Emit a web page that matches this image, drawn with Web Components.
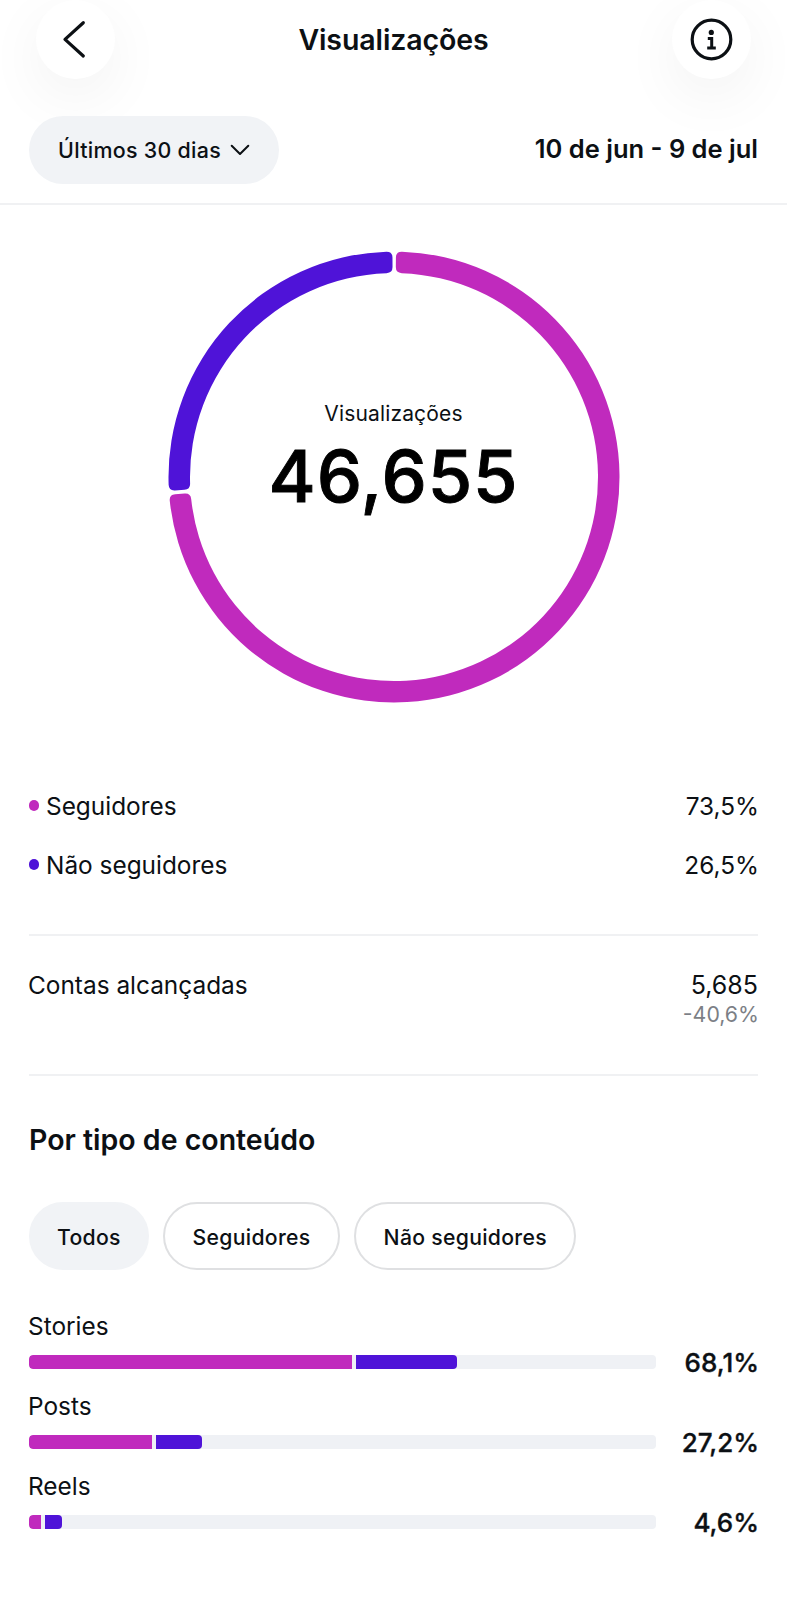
<!DOCTYPE html>
<html lang="pt">
<head>
<meta charset="utf-8">
<title>Visualizações</title>
<style>
  html, body { margin: 0; background: #fff; }
  body { font-family: Inter, "Noto Sans", sans-serif; color: #0c1014; }
</style>
</head>
<body>
<insights-page>
  <top-bar></top-bar>
  <period-bar label="Últimos 30 dias" range="10 de jun - 9 de jul"></period-bar>
  <donut-chart title-text="Visualizações" value="46,655"></donut-chart>
  <legend-list>
    <legend-row color="#c02abd" label="Seguidores" value="73,5%"></legend-row>
    <legend-row color="#4f13d8" label="Não seguidores" value="26,5%"></legend-row>
  </legend-list>
  <stat-row label="Contas alcançadas" value="5,685" delta="-40,6%"></stat-row>
  <content-section heading="Por tipo de conteúdo">
    <filter-chip slot="chips" active>Todos</filter-chip>
    <filter-chip slot="chips">Seguidores</filter-chip>
    <filter-chip slot="chips">Não seguidores</filter-chip>
    <content-bar label="Stories" value="68,1%" a="51.5" b="16.2"></content-bar>
    <content-bar label="Posts" value="27,2%" a="19.6" b="7.4"></content-bar>
    <content-bar label="Reels" value="4,6%" a="1.9" b="2.8"></content-bar>
  </content-section>
</insights-page>

<script>
class InsightsPage extends HTMLElement {
  constructor() {
    super();
    this.attachShadow({ mode: "open" }).innerHTML = `
      <style>
        :host { display: block; width: 787px; height: 1600px; overflow: hidden; background: #fff; }
      </style>
      <slot></slot>`;
  }
}

class TopBar extends HTMLElement {
  constructor() {
    super();
    this.attachShadow({ mode: "open" }).innerHTML = `
      <style>
        :host { display: flex; align-items: center; justify-content: space-between;
                height: 79px; padding: 0 36px; margin-bottom: 37px; }
        .btn { width: 79px; height: 79px; border-radius: 50%; background: #fff;
               box-shadow: 0 18px 60px rgba(0,0,0,.055); display: flex; align-items: center; justify-content: center; }
        h1 { margin: 0; font-size: 28.5px; line-height: 36px; font-weight: 600; letter-spacing: -.1px; }
        svg { display: block; }
      </style>
      <div class="btn">
        <svg width="79" height="79" viewBox="0 0 79 79" fill="none" stroke="#0c1014" stroke-width="3.2" stroke-linecap="round" stroke-linejoin="round">
          <path d="M47.3 22.7 29 39.4 47.3 56"/>
        </svg>
      </div>
      <h1>Visualizações</h1>
      <div class="btn">
        <svg width="79" height="79" viewBox="0 0 79 79" fill="none" stroke="#0c1014">
          <circle cx="39.5" cy="39.5" r="19.3" stroke-width="3.2"/>
          <circle cx="39.3" cy="32.4" r="2.6" fill="#0c1014" stroke="none"/>
          <path d="M35.8 38.4h3.9v9.4M35.2 48h8.6" stroke-width="3"/>
        </svg>
      </div>`;
  }
}

class PeriodBar extends HTMLElement {
  constructor() {
    super();
    this.attachShadow({ mode: "open" }).innerHTML = `
      <style>
        :host { display: flex; align-items: center; justify-content: space-between;
                height: 68px; padding: 0 29px 19px; border-bottom: 2px solid #f0f1f3; }
        .pill { height: 68px; width: 250px; box-sizing: border-box; padding-left: 29px; border-radius: 34px; background: #f1f3f6;
                display: flex; align-items: center; gap: 9px; font-size: 21.4px; font-weight: 500; letter-spacing: .3px; }
        .range { font-size: 25.5px; font-weight: 600; margin-bottom: 3px; }
        svg { display: block; }
      </style>
      <div class="pill">
        <span>${this.getAttribute("label")}</span>
        <svg width="20" height="12" viewBox="0 0 20 12" fill="none" stroke="#0c1014" stroke-width="2" stroke-linecap="round" stroke-linejoin="round">
          <path d="M1.7 1.7 10 10l8.3-8.3"/>
        </svg>
      </div>
      <span class="range">${this.getAttribute("range")}</span>`;
  }
}

// ring segment with slightly rounded corners, angles in degrees clockwise from the top
function ringSegment(cx, cy, R, r, a0, a1, c) {
  const pt = (rad, deg) => {
    const t = (deg - 90) * Math.PI / 180;
    return (cx + rad * Math.cos(t)).toFixed(2) + " " + (cy + rad * Math.sin(t)).toFixed(2);
  };
  const dO = c / R * 180 / Math.PI;
  const dI = c / r * 180 / Math.PI;
  const large = a1 - a0 > 180 ? 1 : 0;
  return `M${pt(R, a0 + dO)} A${R} ${R} 0 ${large} 1 ${pt(R, a1 - dO)} Q${pt(R, a1)} ${pt(R - c, a1)}
          L${pt(r + c, a1)} Q${pt(r, a1)} ${pt(r, a1 - dI)} A${r} ${r} 0 ${large} 0 ${pt(r, a0 + dI)}
          Q${pt(r, a0)} ${pt(r + c, a0)} L${pt(R - c, a0)} Q${pt(R, a0)} ${pt(R, a0 + dO)}Z`;
}

class DonutChart extends HTMLElement {
  constructor() {
    super();
    const pink = ringSegment(226, 226, 225.5, 204, 0.5, 265.5, 6);
    const blue = ringSegment(226, 226, 225.5, 204, 266.5, 359.6, 6);
    this.attachShadow({ mode: "open" }).innerHTML = `
      <style>
        :host { display: block; position: relative; width: 452px; height: 452px; margin: 46px auto 0; }
        svg { display: block; }
        .center { position: absolute; left: 0; right: 0; top: 149px; text-align: center; }
        .t { font-size: 21px; line-height: 28px; letter-spacing: .15px; }
        .v { font-size: 72px; line-height: 76px; font-weight: 500; color: #000; margin-top: 10px; letter-spacing: .9px;
             -webkit-text-stroke: .9px #000; }
      </style>
      <svg width="452" height="452" viewBox="0 0 452 452">
        <path d="${pink}" fill="#c02abd"/>
        <path d="${blue}" fill="#4f13d8"/>
      </svg>
      <div class="center">
        <div class="t">${this.getAttribute("title-text")}</div>
        <div class="v">${this.getAttribute("value")}</div>
      </div>`;
  }
}

class LegendList extends HTMLElement {
  constructor() {
    super();
    this.attachShadow({ mode: "open" }).innerHTML = `
      <style>
        :host { display: block; margin: 73px 29px 0; padding-bottom: 40px; border-bottom: 2px solid #f0f1f3; }
      </style>
      <slot></slot>`;
  }
}

class LegendRow extends HTMLElement {
  constructor() {
    super();
    this.attachShadow({ mode: "open" }).innerHTML = `
      <style>
        :host { display: flex; align-items: center; height: 59px; font-size: 24.4px; }
        i { width: 10.5px; height: 10.5px; border-radius: 50%; background: ${this.getAttribute("color")}; margin: 0 7px 0 -.5px; }
        .v { margin-left: auto; margin-right: -1px; }
      </style>
      <i></i><span>${this.getAttribute("label")}</span>
      <span class="v">${this.getAttribute("value")}</span>`;
  }
}

class StatRow extends HTMLElement {
  constructor() {
    super();
    this.attachShadow({ mode: "open" }).innerHTML = `
      <style>
        :host { display: flex; justify-content: space-between; margin: 0 29px; padding: 34px 0 47px;
                border-bottom: 2px solid #f0f1f3; font-size: 24.4px; line-height: 30px; }
        .lbl { margin-left: -1px; }
        .r { text-align: right; }
        .v { font-size: 25px; }
        .d { font-size: 21.3px; line-height: 26px; color: #7c7f86; margin: 1px -1px 0 0; }
      </style>
      <span class="lbl">${this.getAttribute("label")}</span>
      <div class="r">
        <div class="v">${this.getAttribute("value")}</div>
        <div class="d">${this.getAttribute("delta")}</div>
      </div>`;
  }
}

class ContentSection extends HTMLElement {
  constructor() {
    super();
    this.attachShadow({ mode: "open" }).innerHTML = `
      <style>
        :host { display: block; padding: 46px 29px 0; }
        h2 { margin: 0 0 44px; font-size: 28.5px; line-height: 36px; font-weight: 600; }
        .chips { display: flex; gap: 14.5px; margin-bottom: 42px; }
      </style>
      <h2>${this.getAttribute("heading")}</h2>
      <div class="chips"><slot name="chips"></slot></div>
      <slot></slot>`;
  }
}

class FilterChip extends HTMLElement {
  constructor() {
    super();
    this.attachShadow({ mode: "open" }).innerHTML = `
      <style>
        :host { display: flex; align-items: center; height: 68px; box-sizing: border-box; padding: 1px 27.3px 0;
                border-radius: 34px; border: 2px solid #dfe0e2; font-size: 21.2px; font-weight: 500; letter-spacing: .3px; }
        :host([active]) { background: #f1f3f6; border-color: #f1f3f6; padding: 1px 26px 0; }
      </style>
      <slot></slot>`;
  }
}

class ContentBar extends HTMLElement {
  constructor() {
    super();
    const a = this.getAttribute("a");
    const b = this.getAttribute("b");
    this.attachShadow({ mode: "open" }).innerHTML = `
      <style>
        :host { display: block; margin-bottom: 23px; }
        .l { font-size: 24.4px; line-height: 30px; margin: -1px 0 14px -1px; }
        .row { display: flex; align-items: center; height: 14px; }
        .track { width: 627px; height: 14px; border-radius: 4px; background: #eff1f5; display: flex; gap: 4px; overflow: hidden; }
        .a { width: ${a}%; background: #c02abd; border-radius: 4px 0 0 4px; }
        .b { width: ${b}%; background: #4f13d8; border-radius: 0 4px 4px 0; }
        .v { margin: 2px -1px 0 auto; font-size: 26px; line-height: 14px; font-weight: 500; -webkit-text-stroke: .35px #0c1014; }
      </style>
      <div class="l">${this.getAttribute("label")}</div>
      <div class="row">
        <div class="track"><div class="a"></div><div class="b"></div></div>
        <span class="v">${this.getAttribute("value")}</span>
      </div>`;
  }
}

customElements.define("insights-page", InsightsPage);
customElements.define("top-bar", TopBar);
customElements.define("period-bar", PeriodBar);
customElements.define("donut-chart", DonutChart);
customElements.define("legend-list", LegendList);
customElements.define("legend-row", LegendRow);
customElements.define("stat-row", StatRow);
customElements.define("content-section", ContentSection);
customElements.define("filter-chip", FilterChip);
customElements.define("content-bar", ContentBar);
</script>
</body>
</html>
